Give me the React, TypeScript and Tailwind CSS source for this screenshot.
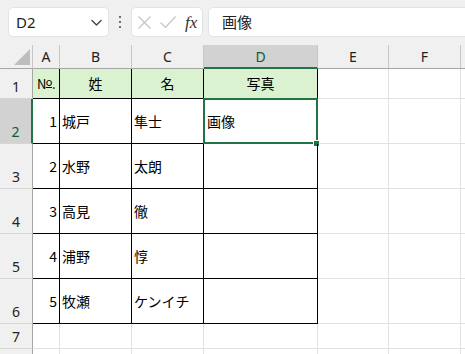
import React from "react";

const JP = { fontFamily: '"Noto Sans CJK JP", "Noto Sans", sans-serif' };

const cols = ["A", "B", "C", "D", "E", "F", ""];
const data = [
  ["1", "城戸", "隼士", "画像"],
  ["2", "水野", "太朗", ""],
  ["3", "高見", "徹", ""],
  ["4", "浦野", "惇", ""],
  ["5", "牧瀬", "ケンイチ", ""],
];

function HeaderCell({ label, selected, last }: { label: string; selected?: boolean; last?: boolean }) {
  return (
    <div
      className={
        "flex items-center justify-center text-[14px] " +
        (selected
          ? "bg-[#d2d2d2] text-[#0e5c2f] border-b-2 border-b-[#217346] border-r border-r-[#c6c6c6]"
          : "bg-[#f0f0f0] text-[#222] border-b border-b-[#a6a6a6] " + (last ? "" : "border-r border-r-[#c6c6c6]"))
      }
      style={{ fontFamily: '"Noto Sans", sans-serif' }}
    >
      {label}
    </div>
  );
}

function RowHeader({ n, selected }: { n: number | null; selected?: boolean }) {
  return (
    <div
      className={
        "flex items-end justify-center pb-[1px] text-[14px] border-b border-b-[#d6d6d6] " +
        (selected
          ? "bg-[#d2d2d2] text-[#0e5c2f] border-r-2 border-r-[#217346]"
          : "bg-[#f0f0f0] text-[#222] border-r border-r-[#a6a6a6]")
      }
      style={{ fontFamily: '"Noto Sans", sans-serif' }}
    >
      {n}
    </div>
  );
}

function Empty() {
  return <div className="border-r border-b border-[#e1e1e1] bg-white" />;
}

export default function App() {
  return (
    <div className="w-[465px] h-[354px] overflow-hidden bg-white">
      {/* Top bar */}
      <div className="h-[45px] bg-[#f0f0f0] flex items-start pt-[7px] pl-[8px] overflow-hidden">
        <div className="w-[101px] h-[30px] shrink-0 rounded-[5px] bg-white border border-[#e3e3e3] flex items-center justify-between pl-[7px] pr-[5px]">
          <span className="text-[15px] text-[#222]" style={{ fontFamily: '"Noto Sans", sans-serif' }}>D2</span>
          <svg width="13" height="13" viewBox="0 0 13 13" fill="none">
            <path d="M2 4.5 L6.5 9 L11 4.5" stroke="#444" strokeWidth="1.4" strokeLinecap="round" strokeLinejoin="round" />
          </svg>
        </div>
        <div className="w-[22px] h-[30px] shrink-0 flex flex-col items-center justify-center gap-[2.5px]">
          <div className="w-[2.5px] h-[2.5px] bg-[#444] rounded-full" />
          <div className="w-[2.5px] h-[2.5px] bg-[#444] rounded-full" />
          <div className="w-[2.5px] h-[2.5px] bg-[#444] rounded-full" />
        </div>
        <div className="w-[72px] h-[30px] shrink-0 rounded-[5px] bg-white border border-[#e3e3e3] flex items-center pl-[5px]">
          <svg width="15" height="15" viewBox="0 0 15 15" fill="none">
            <path d="M1.5 1.5 L13.5 13.5 M13.5 1.5 L1.5 13.5" stroke="#c4c4c4" strokeWidth="1.2" />
          </svg>
          <svg width="18" height="15" viewBox="0 0 18 15" fill="none" className="ml-[7px]">
            <path d="M1.5 7.5 L6.5 12.5 L16.5 1.5" stroke="#c4c4c4" strokeWidth="1.2" />
          </svg>
          <span
            className="ml-[8px] text-[17px] italic text-[#333] leading-none"
            style={{ fontFamily: '"Liberation Serif", serif' }}
          >
            fx
          </span>
        </div>
        <div
          className="ml-[5px] w-[300px] h-[30px] shrink-0 rounded-[5px] bg-white border border-[#e3e3e3] flex items-center pl-[13px] text-[15px] text-[#222]"
          style={JP}
        >
          画像
        </div>
      </div>

      {/* Grid */}
      <div className="grid grid-cols-[33px_27px_72px_72px_114px_71px_72px_20px] grid-rows-[24px_30px_45px_45px_45px_45px_45px_25px_25px]">
        {/* header row */}
        <div className="bg-[#f0f0f0] border-r border-r-[#c6c6c6] border-b border-b-[#a6a6a6] relative">
          <svg className="absolute left-0 top-0" width="33" height="24" viewBox="0 0 33 24">
            <polygon points="30,4 30,20 14,20" fill="#bdbdbd" />
          </svg>
        </div>
        {cols.map((c, i) => (
          <HeaderCell key={i} label={c} selected={c === "D"} last={i === cols.length - 1} />
        ))}

        {/* row 1 */}
        <RowHeader n={1} />
        <div className="bg-[#daf2d0] border-r border-b border-black flex items-center justify-center text-[13px] text-black tracking-[-0.5px]" style={JP}>
          <span>N</span>
          <span className="underline text-[11px] -translate-y-[2px]">o</span>
          <span>.</span>
        </div>
        <div className="bg-[#daf2d0] border-r border-b border-black flex items-center justify-center text-[14px] text-black" style={JP}>姓</div>
        <div className="bg-[#daf2d0] border-r border-b border-black flex items-center justify-center text-[14px] text-black" style={JP}>名</div>
        <div className="bg-[#daf2d0] border-r border-b border-black flex items-center justify-center text-[14px] text-black" style={JP}>写真</div>
        <Empty />
        <Empty />
        <Empty />

        {data.map((r, ri) => (
          <React.Fragment key={ri}>
            <RowHeader n={ri + 2} selected={ri === 0} />
            <div className="border-r border-b border-black flex items-center justify-end pr-[2px] text-[14px] text-black" style={JP}>{r[0]}</div>
            <div className="border-r border-b border-black flex items-center pl-[2px] text-[14px] text-black" style={JP}>{r[1]}</div>
            <div className="border-r border-b border-black flex items-center pl-[2px] text-[14px] text-black" style={JP}>{r[2]}</div>
            <div className="border-r border-b border-black flex items-center pl-[3px] text-[14px] text-black relative" style={JP}>
              {r[3]}
              {ri === 0 && (
                <>
                  <div className="absolute -left-px -top-px -right-px -bottom-px border-2 border-[#217346] pointer-events-none" />
                  <div className="absolute -right-[3px] -bottom-[4px] w-[7px] h-[7px] bg-[#217346] border border-white" />
                </>
              )}
            </div>
            <Empty />
            <Empty />
            <Empty />
          </React.Fragment>
        ))}

        {/* rows 7, 8 */}
        {[7, null].map((n, k) => (
          <React.Fragment key={k}>
            <RowHeader n={n} />
            <Empty />
            <Empty />
            <Empty />
            <Empty />
            <Empty />
            <Empty />
            <Empty />
          </React.Fragment>
        ))}
      </div>
    </div>
  );
}
